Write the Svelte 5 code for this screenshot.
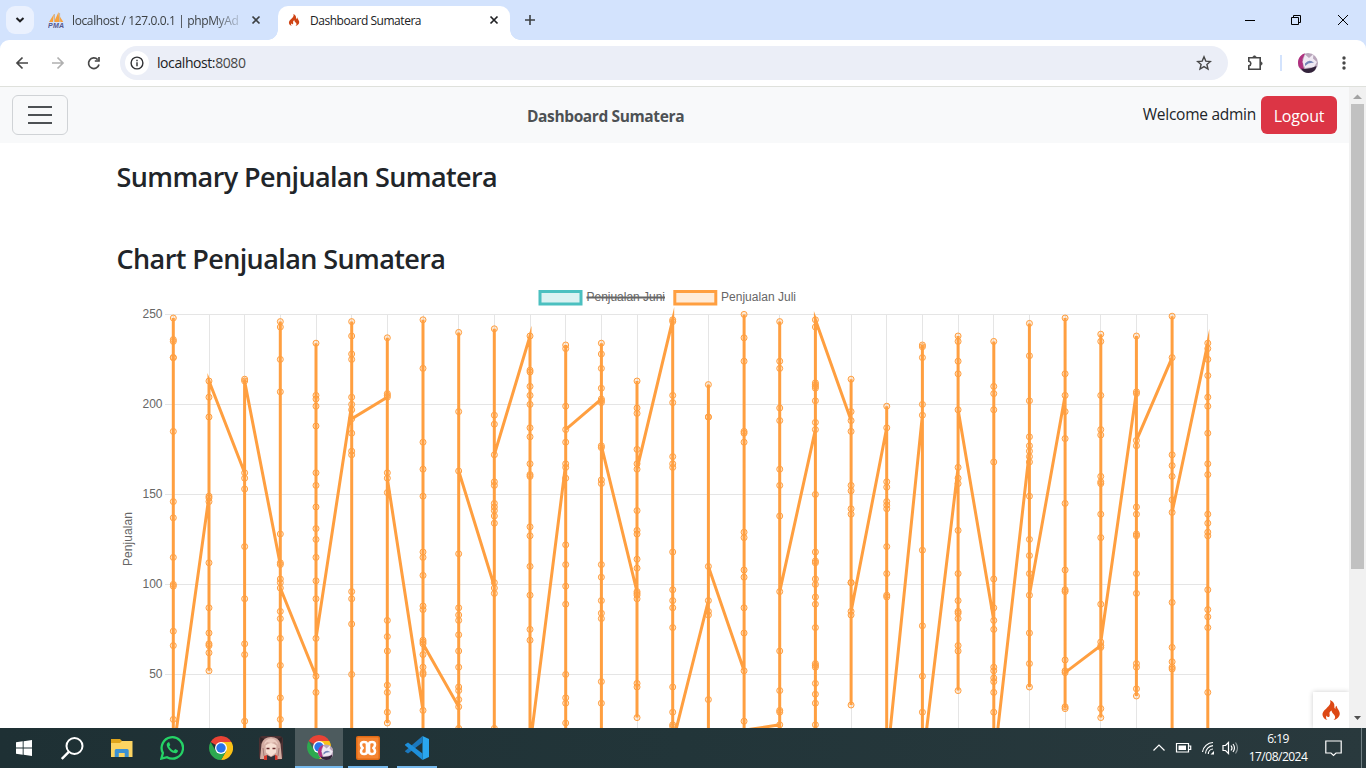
<script>
  const columns = [
    { e: 7, x: 7, lo: 0, p: [248, 236, 235, 226, 226, 185, 146, 137, 115, 100, 99, 74, 66, 25] },
    { e: 149, x: 213, lo: 52, p: [213, 204, 193, 149, 148, 146, 112, 87, 73, 67, 66, 62, 52] },
    { e: 162, x: 213, lo: 0, p: [214, 213, 162, 159, 153, 121, 92, 67, 61, 24] },
    { e: 111, x: 98, lo: 0, p: [246, 243, 225, 207, 128, 112, 111, 103, 101, 98, 85, 81, 70, 55, 37, 25] },
    { e: 49, x: 70, lo: 0, p: [234, 205, 203, 199, 188, 162, 155, 143, 131, 125, 115, 102, 92, 70, 49, 40] },
    { e: 200, x: 192, lo: 0, p: [246, 238, 228, 225, 204, 200, 197, 192, 184, 174, 172, 96, 92, 78, 50] },
    { e: 204, x: 159, lo: 23, p: [237, 206, 205, 204, 162, 159, 151, 80, 71, 63, 44, 40, 29, 23] },
    { e: 30, x: 67, lo: 0, p: [247, 220, 179, 164, 149, 118, 115, 105, 88, 86, 69, 68, 67, 61, 54, 51, 50, 30] },
    { e: 32, x: 163, lo: 0, p: [240, 196, 163, 117, 87, 83, 80, 72, 63, 54, 43, 41, 36, 32, 20] },
    { e: 99, x: 172, lo: 0, p: [242, 194, 189, 172, 157, 155, 145, 143, 141, 138, 134, 101, 98, 95, 20] },
    { e: 238, x: 10, lo: 0, p: [238, 219, 218, 210, 205, 200, 187, 182, 167, 161, 160, 132, 127, 110, 94, 75, 69] },
    { e: 167, x: 186, lo: 0, p: [233, 231, 199, 186, 179, 167, 165, 159, 122, 111, 99, 89, 50, 37, 34, 23] },
    { e: 203, x: 177, lo: 0, p: [234, 228, 220, 209, 203, 202, 201, 177, 176, 158, 156, 111, 104, 91, 84, 81, 46, 34] },
    { e: 96, x: 164, lo: 26, p: [213, 198, 195, 175, 167, 164, 141, 130, 128, 114, 109, 96, 95, 94, 92, 45, 43, 26] },
    { e: 247, x: 12, lo: 0, p: [247, 246, 205, 201, 171, 167, 165, 118, 97, 91, 87, 76, 43, 29, 22, 21] },
    { e: 91, x: 110, lo: 0, p: [211, 193, 193, 110, 91, 85, 83, 36] },
    { e: 52, x: 19, lo: 0, p: [250, 237, 224, 185, 184, 179, 129, 126, 108, 104, 87, 73, 52, 24] },
    { e: 22, x: 96, lo: 0, p: [246, 224, 220, 198, 191, 164, 155, 138, 96, 63, 41, 30, 29, 22] },
    { e: 186, x: 247, lo: 0, p: [247, 243, 212, 211, 210, 209, 202, 190, 186, 150, 118, 113, 112, 103, 100, 93, 89, 76, 56, 55, 54, 45, 39, 34, 22] },
    { e: 191, x: 85, lo: 33, p: [214, 196, 191, 185, 155, 152, 142, 139, 101, 101, 85, 83, 33] },
    { e: 187, x: 0, lo: 0, p: [199, 187, 157, 154, 146, 144, 142, 121, 106, 94, 93] },
    { e: 194, x: 0, lo: 0, p: [233, 232, 226, 200, 194, 119, 77, 49, 29] },
    { e: 165, x: 197, lo: 41, p: [238, 235, 224, 217, 197, 165, 159, 156, 130, 106, 91, 85, 84, 81, 66, 63, 41] },
    { e: 80, x: 0, lo: 0, p: [235, 210, 206, 197, 168, 103, 87, 80, 75, 54, 52, 48, 46, 40, 29] },
    { e: 174, x: 94, lo: 43, p: [245, 227, 202, 182, 177, 174, 171, 168, 149, 125, 116, 106, 94, 73, 56, 43] },
    { e: 205, x: 51, lo: 31, p: [248, 217, 205, 196, 181, 145, 108, 97, 96, 58, 52, 51, 32, 31] },
    { e: 66, x: 68, lo: 26, p: [239, 235, 205, 186, 183, 160, 157, 156, 139, 126, 89, 68, 66, 65, 31, 26] },
    { e: 207, x: 180, lo: 38, p: [238, 207, 206, 180, 177, 143, 139, 128, 127, 106, 95, 56, 54, 42, 38] },
    { e: 226, x: 140, lo: 0, p: [249, 226, 172, 166, 160, 147, 140, 90, 65, 57, 54, 53] },
    { e: 234, x: 0, lo: 0, p: [234, 231, 225, 216, 204, 199, 184, 167, 161, 139, 134, 129, 127, 97, 86, 82, 76, 40] }
  ];
  const cx = (i) => 173.3 + i * 35.672;
  const cy = (v) => 314.4 + (250 - v) * 1.8;

  let line = '';
  columns.forEach((c, i) => {
    const hi = c.p[0];
    let vs;
    if (c.x === hi) vs = [c.e, c.lo, hi];
    else if (c.e === hi) vs = [hi, c.lo, c.x];
    else vs = [c.e, c.lo, hi, c.x];
    vs = vs.filter((v, k) => k === 0 || v !== vs[k - 1]);
    for (const v of vs) line += (line ? 'L' : 'M') + cx(i).toFixed(1) + ' ' + cy(v).toFixed(1);
  });
  const ticks = [250, 200, 150, 100, 50];
</script>

{#snippet flame()}
  <path d="M7.200 0c1 2.800-.6 4.400-2.600 6.400C2.600 8.300.8 10 1.300 12.300c.4 1.900 1.900 3.100 3.900 3.700-1.200-.9-1.600-2.500-.6-3.700.3 1 1 1.400 1.700 1.200 1.200-.4.4-2 .5-3.100.1-1 .9-1.700 1.700-2.100 0 1.600 1 2.300 2 3.400 1.300 1.500 1 3.300-.5 4.300 2.800-.6 5-2.500 5-5.200 0-2.600-2.300-3.900-2.500-6.300-.9.500-1.100 1.400-.9 2.400-.7-.2-1-.8-.9-1.600C11 3.100 9.900 1.100 7.200 0z" />
{/snippet}

{#snippet avatar()}
  <circle cx="10" cy="10" r="10" fill="#b9a6bb" />
  <path d="M0 10C0 4 4 1 7 .5L4.500 6l.5 7 2 5Q0 16 0 10z" fill="#b0307f" />
  <path d="M4.500 9L7 1.500 11 5l4.500-4-.5 4.500 4 3.500-3 5-9 1z" fill="#f0e9f3" />
  <path d="M7 10.500q4.500-5 9-.5-5-1-9 3z" fill="#7384b8" />
  <path d="M3 15.500q8 1.500 15.500-2.500-1 7-8 7-5 0-7.500-4.500z" fill="#33243b" />
{/snippet}

{#snippet chrome()}
  <path d="M12 12L1.610 6A12 12 0 0 1 22.390 6z" fill="#ea4335" />
  <path d="M12 6h10.400A12 12 0 0 1 12 24l5.200-9z" fill="#fbc116" />
  <path d="M6.800 15L1.610 6A12 12 0 0 0 12 24l5.200-9z" fill="#2da94f" />
  <circle cx="12" cy="12" r="6" fill="#fff" />
  <circle cx="12" cy="12" r="4.700" fill="#2b74ea" />
{/snippet}

<div class="screen">
  <header class="tabs">
    <button class="search-tabs" aria-label="Search tabs">
      <svg width="10" height="6"><path d="M1.500 1L5 4.300 8.500 1" fill="none" stroke="#202124" stroke-width="2" /></svg>
    </button>
    <div class="tab">
      <svg width="17" height="16" viewBox="0 0 17 16">
        <path d="M1 10L6 2l-1 8zM6 10L10.500 0l1 10zM11.500 4l3.800 6h-3z" fill="#f7a13c" />
        <path d="M6.500 2v8M11.600 1v9" stroke="#c9b59d" />
        <text x="0" y="15.500" class="pma" textLength="16">PMA</text>
      </svg>
      <span class="t1">localhost / 127.0.0.1 | phpMyAd</span>
      <svg class="close" width="10" height="10"><path d="M1.500 1.500l7 7M8.500 1.500l-7 7" stroke="#3c4043" stroke-width="1.700" /></svg>
    </div>
    <div class="tab active">
      <svg width="14" height="12" viewBox="0 0 16 16" fill="#cf4414">{@render flame()}</svg>
      <span class="t2">Dashboard Sumatera</span>
      <svg class="close" width="10" height="10"><path d="M1.500 1.500l7 7M8.500 1.500l-7 7" stroke="#202124" stroke-width="1.700" /></svg>
    </div>
    <svg class="plus" width="12" height="12"><path d="M6 1v10M1 6h10" stroke="#3c4043" stroke-width="1.600" /></svg>
    <svg class="win" width="106" height="12" fill="none" stroke="#000">
      <path d="M0 6.500h10M46.500 3.500h7v7h-7zM48.500 3V1.500h7v7H54M93 1l10 10M103 1L93 11" />
    </svg>
  </header>

  <div class="toolbar">
    <svg class="navs" width="90" height="18" fill="none" stroke="#474747" stroke-width="1.700">
      <path d="M14 9H3M8.500 3.500L3 9l5.500 5.500" />
      <path d="M38 9h11M43.500 3.500L49 9l-5.500 5.500" stroke="#b0b0b0" />
      <path d="M83.700 5.600A5.300 5.300 0 1 0 85 10.500M85 3v4h-4.200" />
    </svg>
    <div class="omni">
      <span class="info"><svg width="14" height="14" fill="none" stroke="#303134" stroke-width="1.400"><circle cx="7" cy="7" r="5.900" /><path d="M7 6.300v4M7 3.700v1.500" /></svg></span>
      <span class="url">localhost:<i>8080</i></span>
      <svg class="star" width="16" height="16" fill="none" stroke="#474747" stroke-width="1.400"><path d="M8 1.800l1.800 4.300 4.600.4-3.500 3 1.100 4.500L8 11.600 4 14l1.100-4.500-3.500-3 4.600-.4z" /></svg>
    </div>
    <svg class="ext" width="18" height="18" fill="none" stroke="#474747" stroke-width="1.600"><path d="M2.800 3.800h11.400v11.400H2.800v-3.400c2.700-.5 2.700-4.100 0-4.600z" /><path d="M6.800 3.500a1.700 1.700 0 0 1 3.400 0zM14.500 7.800a1.700 1.700 0 0 1 0 3.400z" fill="#474747" stroke-width=".7" /></svg>
    <span class="sep"></span>
    <svg class="ava" width="20" height="20" viewBox="0 0 20 20">{@render avatar()}</svg>
    <svg class="dots" width="4" height="14" fill="#474747"><circle cx="2" cy="2" r="1.700" /><circle cx="2" cy="7" r="1.700" /><circle cx="2" cy="12" r="1.700" /></svg>
  </div>

  <div class="view">
    <div class="page">
      <nav>
        <button class="burger" aria-label="Menu"><i></i><i></i><i></i></button>
        <b>Dashboard Sumatera</b>
        <span class="user"><span class="wel">Welcome admin</span><button class="logout">Logout</button></span>
      </nav>
      <main>
        <h3 class="h-a">Summary Penjualan Sumatera</h3>
        <h3 class="h-b">Chart Penjualan Sumatera</h3>
        <svg class="chart" width="1116" height="443" viewBox="117 285 1116 443">
          <g class="legend">
            <rect x="540" y="291.500" width="41" height="12.500" fill="#dbf2f2" stroke="#4bc0c0" stroke-width="3" />
            <text x="586.500" y="301" textLength="78.500">Penjualan Juni</text>
            <path d="M586.500 297.500h78.500" stroke="#666" stroke-width="2" />
            <rect x="674.800" y="291.500" width="41" height="12.500" fill="#ffecd9" stroke="#ff9f40" stroke-width="3" />
            <text x="721" y="301" textLength="75">Penjualan Juli</text>
          </g>
          <g stroke="#e5e5e5">
            {#each ticks as t}
              <path d={`M165 ${Math.floor(cy(t)) + 0.5}H1208`} />
            {/each}
            {#each columns as c, i}
              <path d={`M${Math.round(cx(i) - 0.3) + 0.5} 314V728`} />
            {/each}
          </g>
          {#each ticks as t}
            <text x="162.500" y={cy(t) + 3.300} text-anchor="end">{t}</text>
          {/each}
          <text transform="translate(132 566) rotate(-90)" textLength="54">Penjualan</text>
          <path d={line} fill="none" stroke="#ff9f40" stroke-width="3" stroke-miterlimit="10" />
          <g fill="#ff9f40" fill-opacity=".2" stroke="#ff9f40">
            {#each columns as c, i}
              {#each c.p as v}
                <circle cx={cx(i)} cy={cy(v)} r="3" />
              {/each}
            {/each}
          </g>
        </svg>
      </main>
      <div class="ci"><svg width="20" height="20" viewBox="0 0 16 16" fill="#dd4814">{@render flame()}</svg></div>
    </div>
    <div class="scroll">
      <svg width="9" height="5"><path d="M0 5l4.500-4.500L9 5z" fill="#a3a3a3" /></svg>
      <span class="thumb"></span>
      <svg width="9" height="5"><path d="M1 0l3.500 4L8 0z" fill="#505050" /></svg>
    </div>
  </div>

  <footer>
    <div class="apps">
      <span><svg width="16" height="16" fill="#fff"><path d="M0 2.300L6.700 1.300V7.500H0zM7.600 1.200L16 0v7.500H7.600zM0 8.500h6.700v6.200L0 13.700zM7.600 8.500H16V16l-8.400-1.200z" /></svg></span>
      <span><svg width="23" height="23" fill="none" stroke="#fff" stroke-width="2"><circle cx="13.500" cy="9" r="8" /><path d="M7.800 14.800L.8 22" stroke-width="2.400" /></svg></span>
      <span class="s3"><svg width="22" height="19"><path d="M0 0h9l2 2h10v16H0z" fill="#e0a51c" /><path d="M0 4h9l2-2h10.500v16H0z" fill="#fcd462" /><path d="M3.700 18v-6.500q0-1.500 1.500-1.500h11q1.500 0 1.500 1.500V18h-4v-4H7.800v4z" fill="#3c91d4" /></svg></span>
      <span class="s3"><svg width="24" height="24" viewBox="0 0 24 24"><path d="M1.400 22.600L2.900 17A10.700 10.700 0 1 1 7 21.200z" fill="none" stroke="#25d366" stroke-width="2.300" /><path d="M8.300 6.200c-1.800.9-2 3-.8 5.200 1.700 3 4 4.900 6.800 5.700 1.700.5 3.700-.6 3.700-2.700L15.200 13l-1.500 1.700c-2-.8-3.600-2.300-4.500-4.200l1.100-1.600-1.100-2.700z" fill="#25d366" /></svg></span>
      <span class="s3"><svg width="24" height="24">{@render chrome()}</svg></span>
      <span class="s3">
        <svg width="24" height="24"><rect width="24" height="24" rx="4" fill="#4b3032" /><path d="M1 23L2.500 8q2-7 9.500-7t9.500 7L23 23z" fill="#d3aca2" /><path d="M5 9q1-6 7-6.500Q18 3 19 9l-3-3-4 1-4-1z" fill="#ebcbc0" /><path d="M6.500 9.500q5.500-5 11 0l-.5 7-5 4-5-4z" fill="#f7dfd3" /><path d="M7.500 12.500h3M13.500 12.500h3" stroke="#6b2e30" stroke-width="1.700" /><path d="M4 12l1 8M20 12l-1 8" stroke="#a67c77" /><path d="M8 19l4 2 4-2 1 5H7z" fill="#303039" /><path d="M5 20l3-1v5H5zM16 18.500l2.500 1.500v4H16z" fill="#d63a2e" /><path d="M1 1l4 2-3.500 4zM23 1l-4 2 3.500 4z" fill="#332326" /></svg>
      </span>
      <span class="on">
        <svg width="26" height="26">{@render chrome()}<g transform="translate(11 9.500) scale(.78)">{@render avatar()}</g></svg>
      </span>
      <span class="run"><svg width="24" height="24"><rect width="24" height="24" rx="2" fill="#e06a15" /><rect x="1.500" y="1.500" width="21" height="21" rx="1" fill="#f58532" /><path d="M8.500 6Q5 5.700 5 8.700q0 2 1.700 3.300Q5 13.300 5 15.300q0 3 3.500 2.700 2.500 0 2.500-2.500V12h2v3.500q0 2.500 2.500 2.500 3.500.3 3.500-2.700 0-2-1.700-3.300Q19 10.700 19 8.700q0-3-3.500-2.700Q13 6 13 8.500V12h-2V8.500Q11 6 8.500 6z" fill="none" stroke="#fff" stroke-width="2.600" stroke-linejoin="round" /></svg></span>
      <span class="run"><svg width="24" height="24"><path d="M17.500 0L24 3v18l-6.500 3z" fill="#2aa7ef" /><path d="M17.500 0v6.500L3 17.500 0 15.500 0 15z" fill="#1b78bd" /><path d="M17.500 24v-6.500L3 6.500 0 8.500v.7z" fill="#1e8fda" /></svg></span>
    </div>
    <div class="tray">
      <svg width="90" height="20" fill="none" stroke="#fff" stroke-width="1.200">
        <path d="M1.500 12.500L7 7l5.500 5.500" />
        <path d="M24.500 5.500h12v8.500h-12zM37 8h1.700v3.500H37" /><path d="M26.500 7.500h7.500v4.500h-7.500z" fill="#fff" stroke="none" />
        <path d="M50.500 14A11 11 0 0 1 61 4.500M53.500 15.500A8 8 0 0 1 61 7.700M56.300 16A5 5 0 0 1 61 11" /><path d="M58.500 16.500l3.500-3.500v3.500z" fill="#fff" stroke="none" />
        <path d="M71 7.500h2.500l3-3v11l-3-3H71zM79 7.500q2 2.500 0 5" /><path d="M81 6q3 4 0 8" /><path d="M83.500 4.500q4 5.500 0 11" stroke="#8c9698" />
      </svg>
      <div class="clock"><span>6:19</span><span>17/08/2024</span></div>
      <svg class="note" width="17" height="17" fill="none" stroke="#fff" stroke-width="1.200"><path d="M.8 1h15.400v12H11l-2.500 2.500L6 13H.8z" /></svg>
      <i class="edge"></i>
    </div>
  </footer>
</div>

<style>
  :global(body) { overflow: hidden; }
  * { box-sizing: border-box; }
  svg { display: block; flex: none; }
  button { font: inherit; padding: 0; border: 0; background: none; }
  .screen { width: 1366px; height: 768px; display: flex; flex-direction: column; overflow: hidden; font-family: "Open Sans", "Noto Sans", sans-serif; background: #d3e3fd; }
  .tabs { height: 40px; display: flex; align-items: center; padding-left: 6px; flex: none; }
  .search-tabs { width: 28px; height: 28px; border-radius: 9px; background: #eaf1fe; display: flex; align-items: center; justify-content: center; }
  .tab { height: 34px; margin-top: 6px; padding: 0 0 6px 14px; display: flex; align-items: center; width: 245px; font-size: 12px; color: #3c4043; white-space: nowrap; }
  .tab > span { width: 169px; margin-left: 7px; }
  .tab .t1 { letter-spacing: -.38px; -webkit-mask-image: linear-gradient(90deg, #000 83%, #0003 99%); mask-image: linear-gradient(90deg, #000 83%, #0003 99%); }
  .tab .close { margin-left: 10px; }
  .pma { font: italic bold 7px "Liberation Sans", sans-serif; fill: #54578e; }
  .active { width: 232px; margin-left: -1px; padding-left: 9px; background: #fff; border-radius: 10px 10px 0 0; color: #202124; position: relative; }
  .active::before, .active::after { content: ""; position: absolute; bottom: 0; width: 10px; height: 10px; }
  .active::before { left: -10px; background: radial-gradient(circle at 0 0, #0000 9.500px, #fff 10px); }
  .active::after { right: -10px; background: radial-gradient(circle at 100% 0, #0000 9.500px, #fff 10px); }
  .active > span { width: 169px; margin-left: 9px; }
  .t2 { letter-spacing: -.46px; }
  .plus { margin-left: 14px; }
  .win { margin: 0 15px 0 auto; }
  .toolbar { height: 47px; flex: none; background: #fff; border-radius: 9px 9px 0 0; border-bottom: 1px solid #dfe1dc; display: flex; align-items: center; padding-left: 14px; }
  .omni { width: 1108px; height: 34px; margin-left: 16px; border-radius: 17px; background: #ebeef7; display: flex; align-items: center; padding: 0 16px 0 5px; }
  .info { width: 24px; height: 24px; border-radius: 50%; background: #fff; display: flex; align-items: center; justify-content: center; }
  .url { margin-left: 8px; margin-top: -1px; font-size: 14px; letter-spacing: -.42px; color: #202124; }
  .url i { font-style: normal; color: #474747; }
  .star { margin-left: auto; }
  .ext { margin-left: 18px; }
  .sep { width: 2px; height: 16px; background: #d3e3fd; margin-left: 16px; }
  .ava { margin-left: 16px; }
  .dots { margin-left: 24px; }
  .view { flex: 1; min-height: 0; display: flex; background: #fff; }
  .page { width: 1349px; display: flex; flex-direction: column; overflow: hidden; position: relative; color: #212529; }
  nav { height: 56px; flex: none; background: #f8f9fa; display: grid; grid-template-columns: 527px 1fr auto; align-items: center; padding-right: 12px; font-size: 16px; }
  nav b { color: #4d5154; font-size: 15.500px; letter-spacing: -.38px; padding-top: 1px; }
  .burger { margin-left: 12px; width: 56px; height: 40px; border: 1px solid #d0d3d6; border-radius: 6px; display: flex; flex-direction: column; gap: 6px; align-items: center; justify-content: center; }
  .burger i { width: 24px; height: 2px; background: #4d5154; }
  .user { display: flex; align-items: center; gap: 5px; }
  .wel { font-size: 15.500px; letter-spacing: -.26px; margin-top: -3px; }
  .logout { width: 76px; height: 38px; padding-top: 1px; border-radius: 6px; background: #dc3545; color: #fff; letter-spacing: -.2px; }
  main { padding: 17px 0 0 116.500px; flex: 1; min-height: 0; }
  h3 { margin: 0; font-size: 27px; line-height: 34px; font-weight: 600; white-space: nowrap; }
  .h-a { letter-spacing: -.6px; }
  .h-b { letter-spacing: -.6px; margin: 48px 0 9px; }
  .chart { margin-left: .5px; }
  .chart text { font: 12px "Liberation Sans", Arial, sans-serif; fill: #666; }
  .ci { position: absolute; right: 0; bottom: 0; width: 36px; height: 36px; background: #fff; box-shadow: 0 0 5px #0003; display: flex; align-items: center; justify-content: center; }
  .scroll { width: 17px; background: #f1f1f1; display: flex; flex-direction: column; align-items: center; padding: 7px 0; }
  .thumb { width: 13px; height: 465px; margin-top: 5px; background: #c1c1c1; }
  .scroll svg:last-child { margin-top: auto; }
  footer { height: 40px; flex: none; background: linear-gradient(90deg, #1e3034, #223539 50%, #29393d); display: flex; justify-content: space-between; color: #fff; }
  .apps { display: flex; }
  .apps span { width: 48px; height: 40px; display: flex; align-items: center; justify-content: center; }
  .apps span:nth-child(2) { width: 49px; }
  .apps .s3 { width: 49.500px; padding-left: 1px; }
  .apps .on { width: 48px; background: #4d5b5e; border-bottom: 2px solid #76b9ed; padding: 2px 0 0 2px; }
  .apps .run { width: 40px; margin-left: 5px; border-bottom: 2px solid #76b9ed; padding-top: 2px; }
  .apps .run + .run { margin-left: 9px; }
  .tray { display: flex; align-items: center; }
  .clock { width: 70px; margin-left: 1px; display: flex; flex-direction: column; align-items: center; font-size: 12px; line-height: 18px; letter-spacing: -.5px; }
  .note { margin-left: 12px; }
  .edge { width: 1px; height: 40px; margin: 0 4px 0 19px; background: #718084; }
</style>
